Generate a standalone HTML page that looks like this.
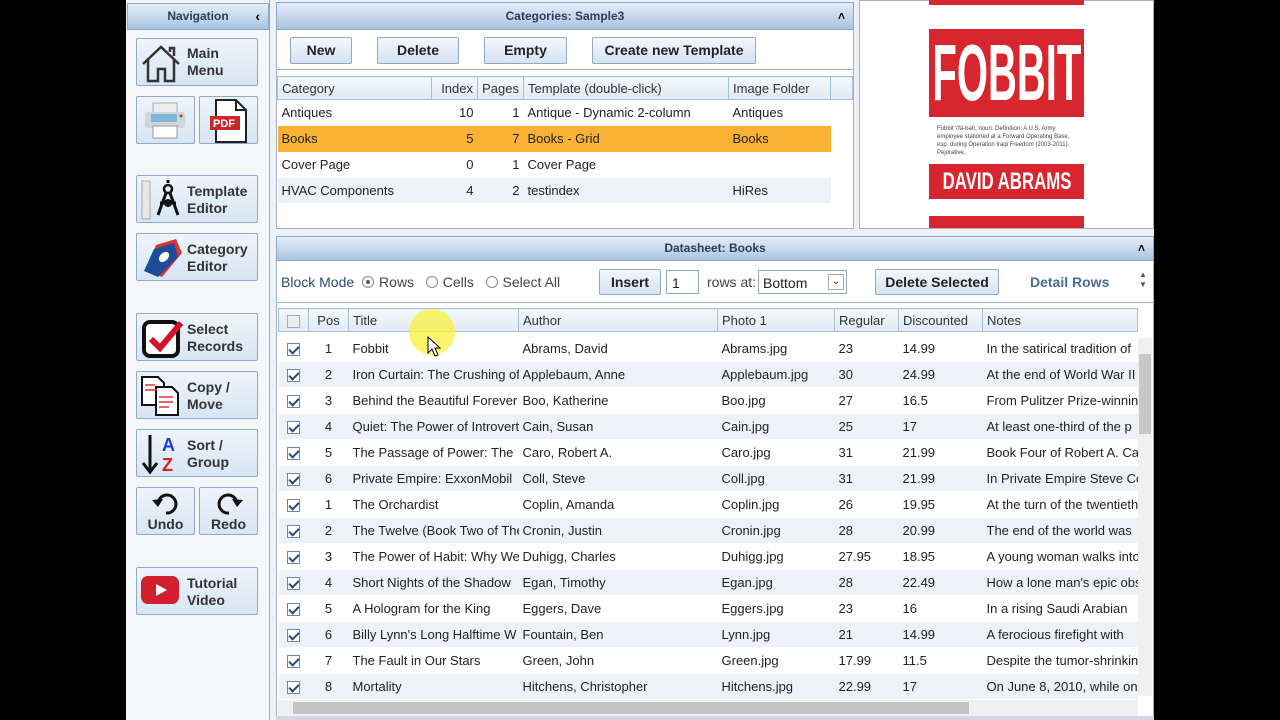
<!DOCTYPE html>
<html><head><meta charset="utf-8"><style>
*{box-sizing:border-box;margin:0;padding:0}
body{width:1280px;height:720px;background:#000;position:relative;overflow:hidden;font-family:"Liberation Sans",sans-serif;font-size:13px;color:#222}
.abs{position:absolute}
.app{left:126px;top:0;width:1028px;height:720px;background:#eef1f5}
.hdr{background:linear-gradient(#e6eef8,#a9c3e2);border:1px solid #8aa6c8;font-weight:bold;color:#2c3e55;font-size:12px;text-align:center}
.nb{position:absolute;left:136px;width:122px;border:1px solid #8fa9c6;border-radius:2px;background:linear-gradient(#eef4fb,#d8e5f3);font-weight:bold;font-size:14px;color:#333;line-height:17px}
.nb span{position:absolute;left:50px}
.btn{position:absolute;top:37px;height:27px;border:1px solid #8fa9c6;border-radius:2px;background:linear-gradient(#f3f7fc,#d6e3f2);font-weight:bold;font-size:14px;color:#222;text-align:center;line-height:25px}
table{border-collapse:collapse;position:absolute;font-size:13px}
td{white-space:nowrap;overflow:hidden;padding:0 4px;height:26px}
.th td{background:linear-gradient(#f4f8fc,#dfe9f5);border:1px solid #a9bfd8;height:23px;color:#333}
.cb{display:inline-block;width:13px;height:13px;border:1px solid #6e86a8;background:#fff;position:relative;vertical-align:middle}
.cb.on::after{content:"";position:absolute;left:3px;top:0px;width:4px;height:8px;border:solid #234a8a;border-width:0 2px 2px 0;transform:rotate(45deg)}
.r td{border-bottom:1px solid #fff}
.alt td{background:#edf2f9}
.rad{display:inline-block;width:12px;height:12px;border:1px solid #888;border-radius:50%;vertical-align:-1px;margin-right:5px;background:#fff;position:relative}
.rad.on::after{content:"";position:absolute;left:3px;top:3px;width:4px;height:4px;border-radius:50%;background:#2a5db0}
</style></head><body>
<div class="abs app"></div>
<!-- nav -->
<div class="abs" style="left:126px;top:0;width:144px;height:720px;background:#f4f6f9;border-right:1px solid #9aa9bb"></div>
<div class="abs hdr" style="left:127px;top:3px;width:142px;height:27px;line-height:25px">Navigation<span style="position:absolute;right:8px;font-size:14px;color:#000">‹</span></div>
<div class="nb" style="top:38px;height:48px"><svg class="abs" style="left:3px;top:3px" width="42" height="42" viewBox="0 0 42 42"><path d="M3 22L21 5 39 22M8 18V39H18V27H25V39H34V18M30 10V6h4v8" fill="none" stroke="#333" stroke-width="2.5"/></svg><span style="top:6px">Main<br>Menu</span></div>
<div class="nb" style="top:96px;width:59px;height:48px"><svg class="abs" style="left:6px;top:4px" width="46" height="40"><rect x="10" y="2" width="24" height="10" fill="#eee" stroke="#aaa"/><rect x="2" y="11" width="40" height="16" rx="3" fill="#cfd6dc"/><rect x="8" y="13" width="26" height="8" fill="#7fb8d6"/><circle cx="38" cy="15" r="1.5" fill="#d33"/><rect x="10" y="25" width="24" height="12" fill="#fff" stroke="#999"/></svg></div>
<div class="nb" style="left:199px;top:96px;width:59px;height:48px"><svg class="abs" style="left:6px;top:1px" width="46" height="46"><path d="M10 2H30L40 12V44H10Z" fill="#fff" stroke="#222" stroke-width="2"/><path d="M30 2V12H40" fill="none" stroke="#222" stroke-width="2"/><rect x="4" y="18" width="30" height="14" fill="#c8282c"/><text x="7" y="29" font-size="11" font-weight="bold" fill="#fff" font-family="Liberation Sans">PDF</text></svg></div>
<div class="nb" style="top:175px;height:48px"><svg class="abs" style="left:3px;top:3px" width="44" height="42"><rect x="2" y="2" width="8" height="38" fill="#e8e8e0" stroke="#aaa"/><circle cx="28" cy="10" r="4" fill="none" stroke="#111" stroke-width="2.5"/><path d="M28 4V1M26 14L18 36M30 14L38 36M20 24h16" stroke="#111" stroke-width="3"/><circle cx="28" cy="24" r="4" fill="#111"/></svg><span style="top:7px">Template<br>Editor</span></div>
<div class="nb" style="top:233px;height:48px"><svg class="abs" style="left:3px;top:3px" width="44" height="42"><path d="M16 8L36 2 42 16 22 40 6 34Z" fill="#d33"/><path d="M14 12L34 6 38 20 18 40 4 34Z" fill="#1f4c9a"/><ellipse cx="24" cy="20" rx="4" ry="6" transform="rotate(45 24 20)" fill="#fff"/></svg><span style="top:7px">Category<br>Editor</span></div>
<div class="nb" style="top:313px;height:48px"><svg class="abs" style="left:4px;top:3px" width="44" height="42"><rect x="3" y="5" width="34" height="34" rx="6" fill="#fff" stroke="#111" stroke-width="4"/><path d="M10 22L19 31 40 6" fill="none" stroke="#d4122a" stroke-width="6"/></svg><span style="top:7px">Select<br>Records</span></div>
<div class="nb" style="top:371px;height:48px"><svg class="abs" style="left:3px;top:3px" width="44" height="42"><path d="M2 2H18L24 8V30H2Z" fill="#fff" stroke="#111" stroke-width="2"/><path d="M16 12H32L38 18V40H16Z" fill="#fff" stroke="#111" stroke-width="2"/><path d="M19 22h14M19 27h14M19 32h10M5 10h10M5 15h12" stroke="#d33" stroke-width="1.5"/></svg><span style="top:7px">Copy /<br>Move</span></div>
<div class="nb" style="top:429px;height:48px"><svg class="abs" style="left:3px;top:3px" width="44" height="42"><path d="M10 2V38M3 30L10 39 17 30" fill="none" stroke="#111" stroke-width="3"/><text x="22" y="18" font-size="18" font-weight="bold" fill="#1a3fd0" font-family="Liberation Sans">A</text><text x="22" y="38" font-size="18" font-weight="bold" fill="#e01b1b" font-family="Liberation Sans">Z</text></svg><span style="top:7px">Sort /<br>Group</span></div>
<div class="nb" style="top:487px;width:59px;height:48px;text-align:center"><svg class="abs" style="left:14px;top:3px" width="30" height="24"><path d="M7 14A9 9 0 1 1 15 22" fill="none" stroke="#111" stroke-width="3"/><path d="M1 9L7 16 12 8Z" fill="#111"/></svg><div style="position:absolute;top:28px;width:100%">Undo</div></div>
<div class="nb" style="left:199px;top:487px;width:59px;height:48px;text-align:center"><svg class="abs" style="left:14px;top:3px" width="30" height="24"><path d="M23 14A9 9 0 1 0 15 22" fill="none" stroke="#111" stroke-width="3"/><path d="M29 9L23 16 18 8Z" fill="#111"/></svg><div style="position:absolute;top:28px;width:100%">Redo</div></div>
<div class="nb" style="top:567px;height:48px"><svg class="abs" style="left:4px;top:8px" width="40" height="30"><rect x="0" y="0" width="38" height="28" rx="7" fill="#d11f2d"/><path d="M15 8L26 14 15 20Z" fill="#fff"/></svg><span style="top:7px">Tutorial<br>Video</span></div>

<!-- categories -->
<div class="abs" style="left:276px;top:2px;width:578px;height:227px;background:#fff;border:1px solid #9fb3cc"></div>
<div class="abs hdr" style="left:276px;top:2px;width:578px;height:28px;line-height:27px">Categories: Sample3<span style="position:absolute;right:8px;color:#000">˄</span></div>
<div class="btn" style="left:290px;width:62px">New</div>
<div class="btn" style="left:377px;width:82px">Delete</div>
<div class="btn" style="left:484px;width:83px">Empty</div>
<div class="btn" style="left:592px;width:164px">Create new Template</div>
<div class="abs" style="left:276px;top:69px;width:578px;height:1px;background:#9fb3cc"></div>
<table style="left:277px;top:76px;width:576px">
<tr class="th"><td style="width:154px">Category</td><td style="width:46px;text-align:right">Index</td><td style="width:46px;text-align:right">Pages</td><td style="width:205px">Template (double-click)</td><td style="width:102px">Image Folder</td><td></td></tr>
<tr class="r"><td>Antiques</td><td style="text-align:right">10</td><td style="text-align:right">1</td><td>Antique - Dynamic 2-column</td><td>Antiques</td><td style="background:#fff"></td></tr>
<tr style="background:#f9b233"><td>Books</td><td style="text-align:right">5</td><td style="text-align:right">7</td><td>Books - Grid</td><td>Books</td><td style="background:#fff"></td></tr>
<tr class="r"><td>Cover Page</td><td style="text-align:right">0</td><td style="text-align:right">1</td><td>Cover Page</td><td></td><td></td></tr>
<tr class="r alt"><td>HVAC Components</td><td style="text-align:right">4</td><td style="text-align:right">2</td><td>testindex</td><td>HiRes</td><td style="background:#fff"></td></tr>
</table>

<!-- book image -->
<div class="abs" style="left:859px;top:0;width:295px;height:229px;background:#fff;border:1px solid #9fb3cc"></div>
<div class="abs" style="left:929px;top:0;width:155px;height:5px;background:#d8262e"></div>
<div class="abs" style="left:929px;top:29px;width:155px;height:88px;background:#d8262e;overflow:hidden;text-align:center"><span style="display:inline-block;color:#fff;font-size:80px;font-weight:bold;line-height:88px;transform:scaleX(0.5);transform-origin:center;white-space:nowrap;margin:0 -100px">FOBBIT</span></div>
<div class="abs" style="left:937px;top:125px;width:140px;font-size:6px;line-height:8px;color:#444">Fobbit \'fä-bət\, noun. Definition: A U.S. Army employee stationed at a Forward Operating Base, esp. during Operation Iraqi Freedom (2003-2011). Pejorative.</div>
<div class="abs" style="left:929px;top:164px;width:155px;height:35px;background:#d8262e;overflow:hidden;text-align:center"><span style="display:inline-block;color:#fff;font-size:24px;font-weight:bold;line-height:35px;transform:scaleX(0.7);white-space:nowrap;margin:0 -60px">DAVID ABRAMS</span></div>
<div class="abs" style="left:929px;top:216px;width:155px;height:12px;background:#d8262e"></div>

<!-- datasheet -->
<div class="abs" style="left:276px;top:236px;width:878px;height:484px;background:#fff;border:1px solid #9fb3cc"></div>
<div class="abs hdr" style="left:276px;top:236px;width:878px;height:25px;line-height:23px">Datasheet: Books<span style="position:absolute;right:8px;color:#000">˄</span></div>
<div class="abs" style="left:281px;top:274px;font-size:14px;color:#444"><b style="font-weight:normal;color:#2a4a75">Block Mode</b> <span class="rad on" style="margin-left:4px"></span>Rows &nbsp; <span class="rad"></span>Cells &nbsp; <span class="rad"></span>Select All</div>
<div class="btn" style="left:599px;top:269px;width:62px;height:26px;line-height:24px">Insert</div>
<div class="abs" style="left:666px;top:270px;width:33px;height:24px;border:1px solid #8fa9c6;background:#fff;padding:4px 5px;font-size:14px">1</div>
<div class="abs" style="left:707px;top:274px;font-size:14px;color:#444">rows at:</div>
<div class="abs" style="left:758px;top:270px;width:89px;height:24px;border:1px solid #8fa9c6;background:#fff;padding:4px 4px;font-size:14px">Bottom<span style="position:absolute;right:2px;top:3px;width:16px;height:16px;border:1px solid #aab;font-size:10px;text-align:center;line-height:14px">⌄</span></div>
<div class="btn" style="left:875px;top:269px;width:124px;height:26px;line-height:24px">Delete Selected</div>
<div class="abs" style="left:1030px;top:274px;font-size:14px;font-weight:bold;color:#4a6d96">Detail Rows</div>
<div class="abs" style="left:1139px;top:270px;font-size:8px;color:#555;line-height:10px">▲<br>▼</div>
<div class="abs" style="left:276px;top:302px;width:878px;height:1px;background:#9fb3cc"></div>
<table style="left:278px;top:308px;width:860px;table-layout:fixed">
<colgroup><col style="width:30px"><col style="width:40px"><col style="width:170px"><col style="width:199px"><col style="width:117px"><col style="width:64px"><col style="width:84px"><col></colgroup>
<tr class="th"><td style="text-align:center"><span class="cb" style="border-color:#aaa;background:#eee"></span></td><td style="text-align:center">Pos</td><td>Title</td><td>Author</td><td>Photo 1</td><td>Regular</td><td>Discounted</td><td>Notes</td></tr>
<tr style="height:4px"><td style="height:4px"></td></tr>
<tr class="r"><td style="text-align:center"><span class="cb on"></span></td><td style="text-align:center">1</td><td>Fobbit</td><td>Abrams, David</td><td>Abrams.jpg</td><td>23</td><td>14.99</td><td>In the satirical tradition of</td></tr>
<tr class="r alt"><td style="text-align:center"><span class="cb on"></span></td><td style="text-align:center">2</td><td>Iron Curtain: The Crushing of</td><td>Applebaum, Anne</td><td>Applebaum.jpg</td><td>30</td><td>24.99</td><td>At the end of World War II</td></tr>
<tr class="r"><td style="text-align:center"><span class="cb on"></span></td><td style="text-align:center">3</td><td>Behind the Beautiful Forever</td><td>Boo, Katherine</td><td>Boo.jpg</td><td>27</td><td>16.5</td><td>From Pulitzer Prize-winning</td></tr>
<tr class="r alt"><td style="text-align:center"><span class="cb on"></span></td><td style="text-align:center">4</td><td>Quiet: The Power of Introverts</td><td>Cain, Susan</td><td>Cain.jpg</td><td>25</td><td>17</td><td>At least one-third of the p</td></tr>
<tr class="r"><td style="text-align:center"><span class="cb on"></span></td><td style="text-align:center">5</td><td>The Passage of Power: The</td><td>Caro, Robert A.</td><td>Caro.jpg</td><td>31</td><td>21.99</td><td>Book Four of Robert A. Caro</td></tr>
<tr class="r alt"><td style="text-align:center"><span class="cb on"></span></td><td style="text-align:center">6</td><td>Private Empire: ExxonMobil</td><td>Coll, Steve</td><td>Coll.jpg</td><td>31</td><td>21.99</td><td>In Private Empire Steve Coll</td></tr>
<tr class="r"><td style="text-align:center"><span class="cb on"></span></td><td style="text-align:center">1</td><td>The Orchardist</td><td>Coplin, Amanda</td><td>Coplin.jpg</td><td>26</td><td>19.95</td><td>At the turn of the twentieth</td></tr>
<tr class="r alt"><td style="text-align:center"><span class="cb on"></span></td><td style="text-align:center">2</td><td>The Twelve (Book Two of The</td><td>Cronin, Justin</td><td>Cronin.jpg</td><td>28</td><td>20.99</td><td>The end of the world was</td></tr>
<tr class="r"><td style="text-align:center"><span class="cb on"></span></td><td style="text-align:center">3</td><td>The Power of Habit: Why We</td><td>Duhigg, Charles</td><td>Duhigg.jpg</td><td>27.95</td><td>18.95</td><td>A young woman walks into</td></tr>
<tr class="r alt"><td style="text-align:center"><span class="cb on"></span></td><td style="text-align:center">4</td><td>Short Nights of the Shadow</td><td>Egan, Timothy</td><td>Egan.jpg</td><td>28</td><td>22.49</td><td>How a lone man's epic obs</td></tr>
<tr class="r"><td style="text-align:center"><span class="cb on"></span></td><td style="text-align:center">5</td><td>A Hologram for the King</td><td>Eggers, Dave</td><td>Eggers.jpg</td><td>23</td><td>16</td><td>In a rising Saudi Arabian</td></tr>
<tr class="r alt"><td style="text-align:center"><span class="cb on"></span></td><td style="text-align:center">6</td><td>Billy Lynn's Long Halftime W</td><td>Fountain, Ben</td><td>Lynn.jpg</td><td>21</td><td>14.99</td><td>A ferocious firefight with</td></tr>
<tr class="r"><td style="text-align:center"><span class="cb on"></span></td><td style="text-align:center">7</td><td>The Fault in Our Stars</td><td>Green, John</td><td>Green.jpg</td><td>17.99</td><td>11.5</td><td>Despite the tumor-shrinking</td></tr>
<tr class="r alt"><td style="text-align:center"><span class="cb on"></span></td><td style="text-align:center">8</td><td>Mortality</td><td>Hitchens, Christopher</td><td>Hitchens.jpg</td><td>22.99</td><td>17</td><td>On June 8, 2010, while on</td></tr>
</table>
<div class="abs" style="left:1138px;top:338px;width:14px;height:358px;background:#f0f0f0"></div>
<div class="abs" style="left:1139px;top:354px;width:12px;height:80px;background:#c8c8c8"></div>
<div class="abs" style="left:278px;top:700px;width:860px;height:16px;background:#f0f0f0"></div>
<div class="abs" style="left:293px;top:702px;width:676px;height:12px;background:#c4c4c4"></div>
<div class="abs" style="left:276px;top:716px;width:878px;height:4px;background:#d0d8e2"></div>
<div class="abs" style="left:409px;top:309px;width:46px;height:46px;border-radius:50%;background:rgba(250,240,60,0.75)"></div>
<svg class="abs" style="left:427px;top:336px" width="14" height="22"><path d="M1 1V17L5 13 8 20 11 19 8 12H13Z" fill="#fff" stroke="#000"/></svg>
</body></html>
